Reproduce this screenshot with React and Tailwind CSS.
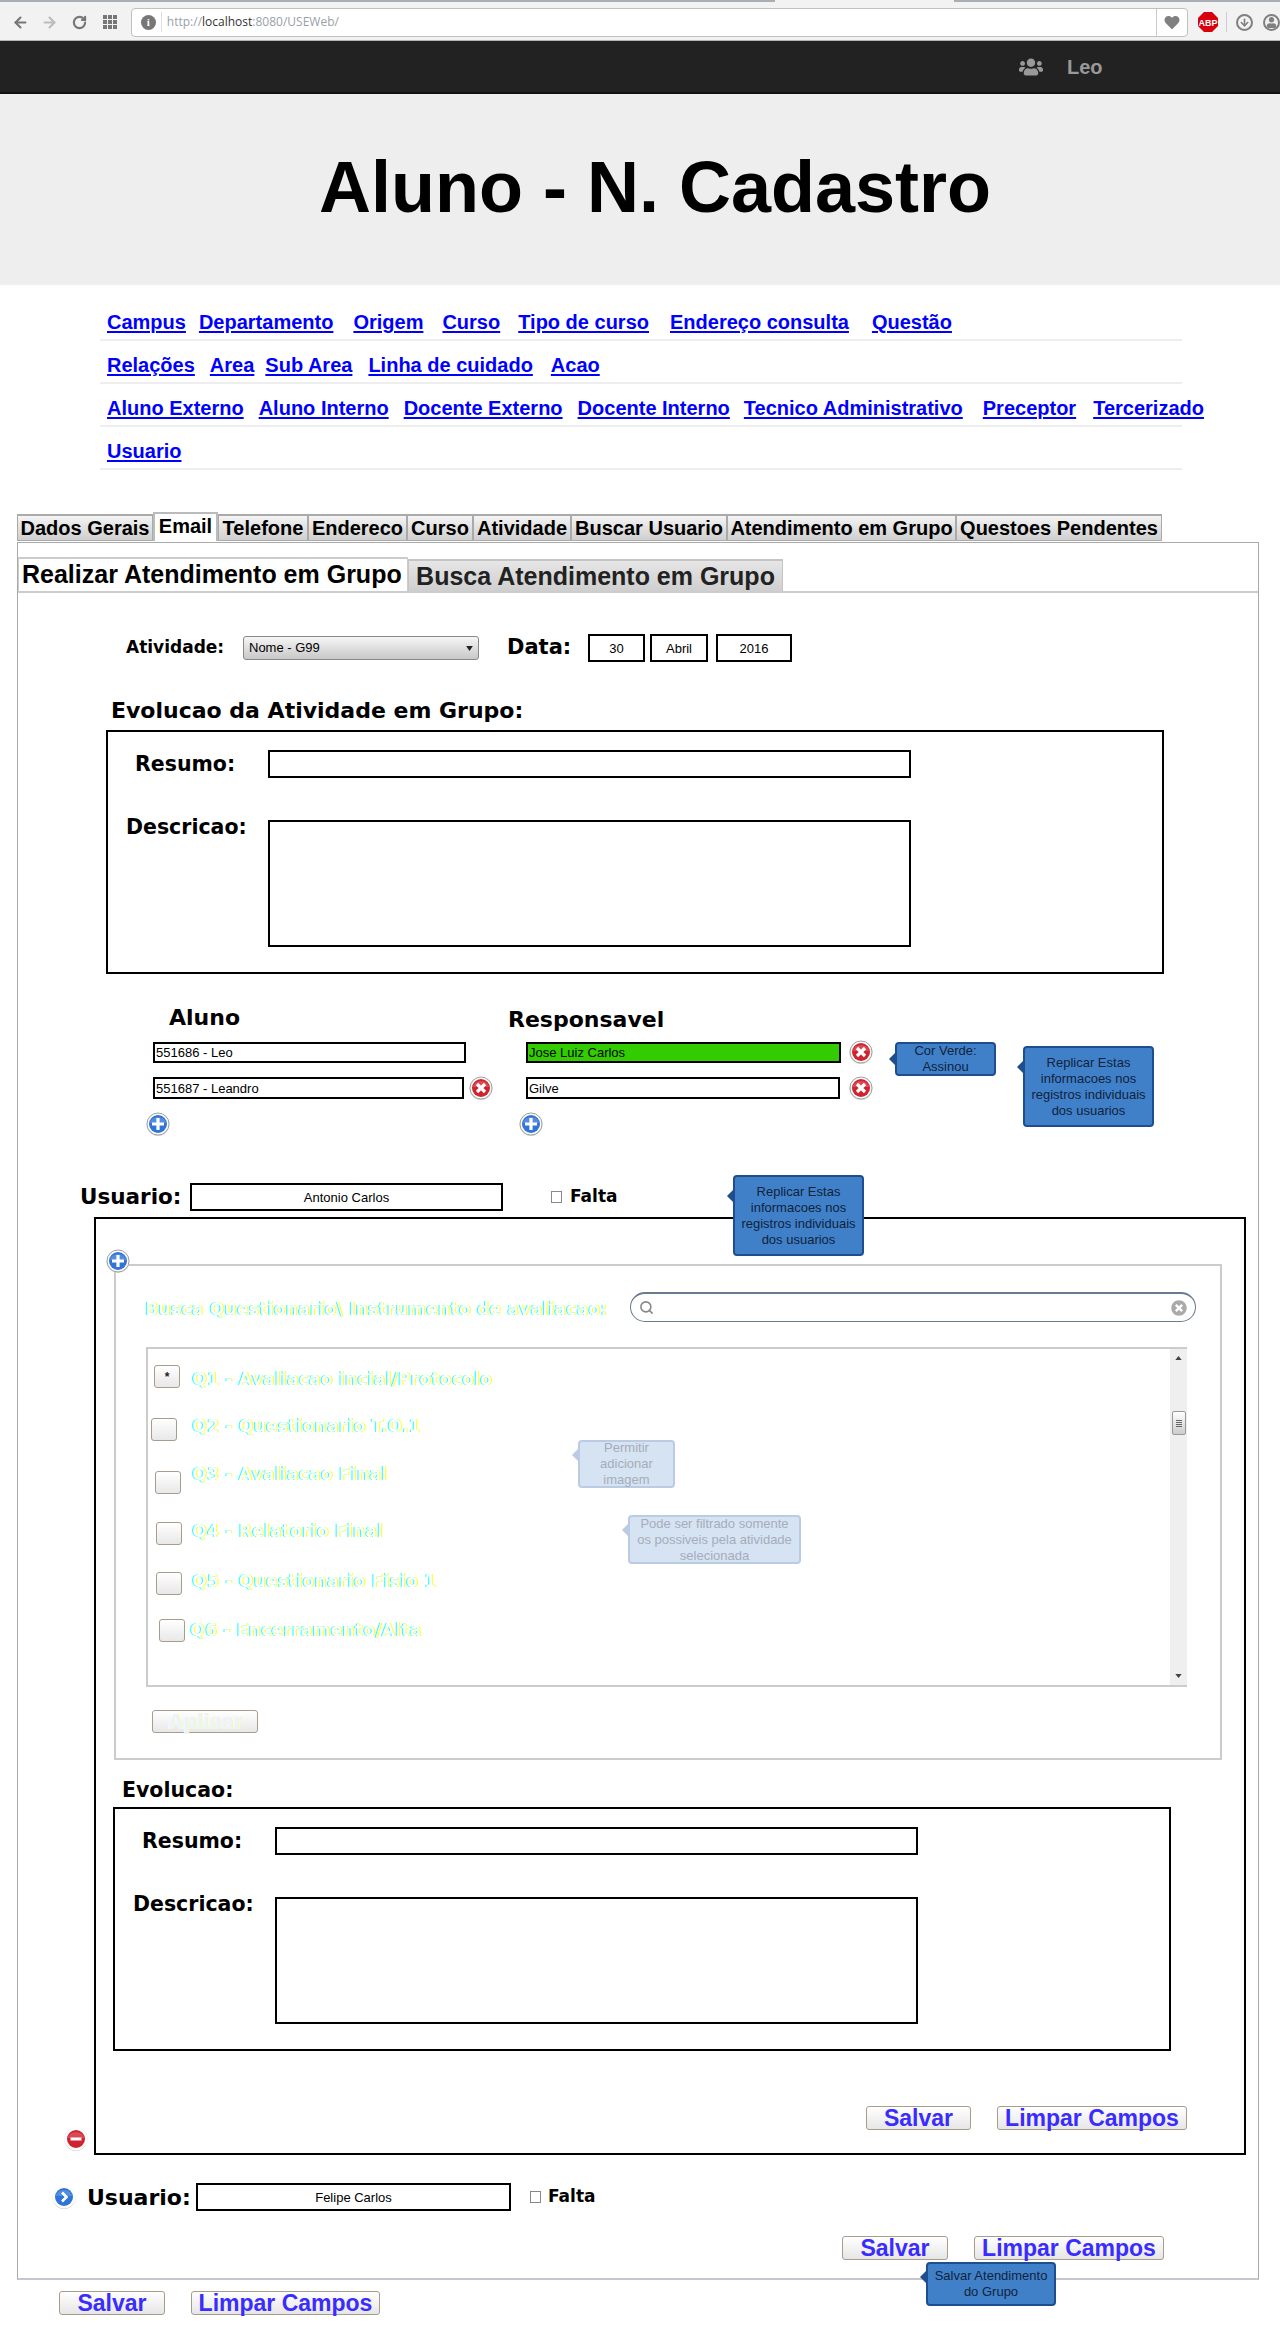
import React from 'react';
import { ArrowLeft, ArrowRight, RotateCw, Search, ArrowDown } from 'lucide-react';
import { FaHeart, FaUsers, FaUser, FaTimesCircle } from 'react-icons/fa';

const heading = "font-['DejaVu_Sans',sans-serif] font-bold text-black whitespace-nowrap";
const faded = "font-['DejaVu_Sans',sans-serif] font-bold text-white whitespace-nowrap [text-shadow:-1px_0_0_#00ffff,1px_0_0_#ffff00]";

const navRows = [
  [
    ['Campus', 'ml-[7px]'],
    ['Departamento', 'ml-[13px]'],
    ['Origem', 'ml-[20px]'],
    ['Curso', 'ml-[19px]'],
    ['Tipo de curso', 'ml-[18px]'],
    ['Endereço consulta', 'ml-[21px]'],
    ['Questão', 'ml-[23px]'],
  ],
  [
    ['Relações', 'ml-[7px]'],
    ['Area', 'ml-[15px]'],
    ['Sub Area', 'ml-[11px]'],
    ['Linha de cuidado', 'ml-[16px]'],
    ['Acao', 'ml-[18px]'],
  ],
  [
    ['Aluno Externo', 'ml-[7px]'],
    ['Aluno Interno', 'ml-[15px]'],
    ['Docente Externo', 'ml-[15px]'],
    ['Docente Interno', 'ml-[15px]'],
    ['Tecnico Administrativo', 'ml-[14px]'],
    ['Preceptor', 'ml-[20px]'],
    ['Tercerizado', 'ml-[17px]'],
  ],
  [['Usuario', 'ml-[7px]']],
];

const tabs = [
  ['Dados Gerais', 'w-[136px]'],
  ['Email', 'w-[65px]'],
  ['Telefone', 'w-[90px]'],
  ['Endereco', 'w-[99px]'],
  ['Curso', 'w-[66px]'],
  ['Atividade', 'w-[98px]'],
  ['Buscar Usuario', 'w-[156px]'],
  ['Atendimento em Grupo', 'w-[229px]'],
  ['Questoes Pendentes', 'w-[206px]'],
];

const questions = [
  { label: 'Q1 - Avaliacao incial/Protocolo', row: 'mt-[16px]', box: 'ml-[6px]', text: 'translate-y-[3px]', mark: '*' },
  { label: 'Q2 - Questionario T.O.1', row: 'mt-[30px]', box: 'ml-[3px]', text: '-translate-y-[3px]' },
  { label: 'Q3 - Avaliacao Final', row: 'mt-[30px]', box: 'ml-[7px]', text: '-translate-y-[8px]' },
  { label: 'Q4 - Relatorio Final', row: 'mt-[28px]', box: 'ml-[8px]', text: '-translate-y-[2px]' },
  { label: 'Q5 - Questionario Fisio 1', row: 'mt-[27px]', box: 'ml-[8px]', text: '-translate-y-[2px]' },
  { label: 'Q6 - Encerramento/Alta', row: 'mt-[24px]', box: 'ml-[11px]', text: '-translate-x-[2px]' },
];

// round aqua icons used for add / remove
const RoundIcon = ({ kind, className = '' }) => {
  const red = kind === 'remove' || kind === 'minus';
  return (
    <svg viewBox="0 0 24 24" className={`w-[24px] h-[24px] shrink-0 ${className}`}>
      <circle cx="12" cy="12.5" r="11.5" fill="#d8d8d8" />
      <circle cx="12" cy="12" r="11" fill="#ffffff" stroke={kind === 'minus' || kind === 'arrow' ? '#ffffff' : '#a0a0a0'} />
      <circle cx="12" cy="12" r="9" fill={red ? '#d1232f' : '#2f74d6'} />
      <path d="M3.5 11a9 9 0 0 1 17 0z" fill="#ffffff" opacity="0.18" />
      {kind === 'remove' && <path d="M8 8l8 8M16 8l-8 8" stroke="#fff" strokeWidth="3.2" />}
      {kind === 'add' && <path d="M12 6v12M6 12h12" stroke="#fff" strokeWidth="3.2" />}
      {kind === 'minus' && <path d="M6.5 12h11" stroke="#fff" strokeWidth="3" />}
      {kind === 'arrow' && <path d="M10 7.5l4.5 4.5-4.5 4.5" fill="none" stroke="#fff" strokeWidth="2.6" />}
    </svg>
  );
};

const Box = ({ className = '', fill = 'bg-white', children }) => (
  <div className={`border-2 border-black ${fill} text-[13px] leading-none text-black flex items-center shrink-0 ${className}`}>
    {children}
  </div>
);

const Note = ({ className = '', pale, tail = 'top-[14px]', children }) => (
  <div
    className={`absolute z-10 border-2 rounded-[4px] flex items-center justify-center text-center text-[13px] leading-[16px] whitespace-nowrap ${
      pale ? 'bg-[#d5e3f3] border-[#bccbe4] text-[#a6adb8]' : 'bg-[#4080c8] border-[#1f4e8f] text-[#10233c]'
    } ${className}`}
  >
    <svg viewBox="0 0 8 14" className={`absolute -left-[9px] w-[8px] h-[14px] ${tail}`}>
      <path d="M8 0L1 7l7 7z" fill={pale ? '#bccbe4' : '#1f4e8f'} />
    </svg>
    <span>{children}</span>
  </div>
);

const Btn = ({ className = '', children }) => (
  <div className={`h-[24px] border border-[#a89c8c] rounded-[3px] bg-gradient-to-b from-white to-[#e6e6e6] flex items-center justify-center text-[23px] font-bold text-[#3a2cff] whitespace-nowrap shrink-0 ${className}`}>
    {children}
  </div>
);

const EvolucaoBox = ({ className = '' }) => (
  <div className={`w-[1058px] h-[244px] border-2 border-black ${className}`}>
    <div className="flex items-center mt-[18px] h-[28px]">
      <div className={`${heading} text-[20.5px] ml-[27px] w-[133px]`}>Resumo:</div>
      <Box className="w-[643px] h-[28px]" />
    </div>
    <div className="flex items-start mt-[42px]">
      <div className={`${heading} text-[20.5px] leading-[20px] ml-[18px] w-[142px] -translate-y-[3px]`}>Descricao:</div>
      <Box className="w-[643px] h-[127px]" />
    </div>
  </div>
);

const Browser = () => (
  <div className="h-[41px] bg-[#f2f2f2] border-b border-[#b5b5b5] relative">
    <div className="flex h-[2px]">
      <div className="w-[775px] bg-[#a9aeb6]" />
      <div className="w-[179px] bg-[#f2f2f2]" />
      <div className="flex-1 bg-[#a9aeb6]" />
    </div>
    <div className="flex items-center h-[32px] mt-[4px]">
      <ArrowLeft className="w-[17px] h-[17px] ml-[12px] text-[#777]" strokeWidth={3} />
      <ArrowRight className="w-[17px] h-[17px] ml-[12px] text-[#bbb]" strokeWidth={3} />
      <RotateCw className="w-[15px] h-[15px] ml-[14px] text-[#777]" strokeWidth={3.5} />
      <div className="grid grid-cols-3 gap-[1px] w-[14px] ml-[16px]">
        {[1, 2, 3, 4, 5, 6, 7, 8, 9].map((n) => (
          <div key={n} className="w-[4px] h-[4px] bg-[#777]" />
        ))}
      </div>
      <div className="ml-[14px] w-[1060px] h-[29px] bg-white border border-[#c0c0c0] rounded-[4px] flex items-center relative">
        <div className="ml-[9px] w-[15px] h-[15px] rounded-full bg-[#777] text-white text-[11px] font-bold flex items-center justify-center font-['Liberation_Serif',serif]">i</div>
        <div className="ml-[5px] w-[1px] h-[20px] bg-[#ddd]" />
        <div className="ml-[5px] text-[12px] font-['Open_Sans',sans-serif] text-[#9aa0a8]">
          http://<span className="text-[#333]">localhost</span>:8080/USEWeb/
        </div>
        <div className="absolute right-0 top-0 h-full w-[31px] border-l border-[#ccc] flex items-center justify-center">
          <FaHeart className="w-[16px] h-[15px] text-[#808080]" />
        </div>
      </div>
      <svg viewBox="0 0 20 20" className="w-[20px] h-[20px] ml-[10px] shrink-0">
        <path d="M6 0h8l6 6v8l-6 6H6l-6-6V6z" fill="#d9000d" />
        <text x="10" y="13.5" textAnchor="middle" fontSize="9" fontWeight="700" fill="#fff" fontFamily="Liberation Sans">ABP</text>
      </svg>
      <div className="ml-[8px] w-[1px] h-[20px] bg-[#ccc]" />
      <div className="ml-[9px] w-[17px] h-[17px] rounded-full border-2 border-[#808080] flex items-center justify-center shrink-0">
        <ArrowDown className="w-[11px] h-[11px] text-[#808080]" strokeWidth={3.5} />
      </div>
      <div className="ml-[10px] w-[17px] h-[17px] rounded-full border-2 border-[#808080] flex items-center justify-center overflow-hidden shrink-0">
        <FaUser className="w-[11px] h-[11px] text-[#808080]" />
      </div>
    </div>
  </div>
);

const App = () => {
  return (
    <div className="w-[1280px] h-[2330px] overflow-hidden bg-white font-['Liberation_Sans',Arial,sans-serif]">
      <Browser />

      <div className="h-[53px] bg-[#222222] border-b-2 border-[#111] flex items-center">
        <FaUsers className="ml-[1019px] w-[24px] h-[24px] text-[#999]" />
        <span className="ml-[24px] text-[20px] font-bold text-[#999]">Leo</span>
      </div>

      <div className="h-[191px] bg-[#eeeeee] flex items-center justify-center pl-[30px] pb-[6px]">
        <h1 className="text-[72px] font-bold text-black leading-none">Aluno - N. Cadastro</h1>
      </div>

      <nav className="mt-[13px] ml-[100px] w-[1082px]">
        {navRows.map((row, i) => (
          <div key={i} className="h-[43px] border-b-2 border-[#eeeeee] flex items-start pt-[9px] whitespace-nowrap">
            {row.map(([label, gap]) => (
              <a key={label} href="#" className={`${gap} text-[20px] font-bold text-[#0000ff] underline decoration-2 underline-offset-2`}>
                {label}
              </a>
            ))}
          </div>
        ))}
      </nav>

      <div className="mt-[43px] ml-[17px] w-[1243px] h-[29px] flex items-end border-b border-transparent">
        {tabs.map(([label, w]) =>
          label === 'Email' ? (
            <div key={label} className={`${w} h-[29px] bg-white border-2 border-b-0 border-[#bbb] text-[20px] leading-[24px] font-bold text-black text-center whitespace-nowrap`}>
              {label}
            </div>
          ) : (
            <div key={label} className={`${w} h-[27px] bg-gradient-to-b from-[#f4f4f4] to-[#cfcfcf] border border-t-2 border-[#aaa] text-[20px] leading-[24px] font-bold text-black text-center whitespace-nowrap`}>
              {label}
            </div>
          )
        )}
      </div>

      <div className="relative ml-[17px] w-[1242px] h-[1738px] border border-[#aaa] border-b-2 border-b-[#c6c6ce]">
        <div className="flex items-end h-[50px] border-b-2 border-[#ccc]">
          <div className="w-[390px] h-[34px] bg-white border-t-2 border-x border-[#ccc] text-[25px] leading-[30px] font-bold text-black pl-[3px] whitespace-nowrap">
            Realizar Atendimento em Grupo
          </div>
          <div className="w-[375px] h-[32px] bg-gradient-to-b from-[#e6e6e6] to-[#cfcfcf] border-t-2 border-x border-[#c4c4c4] text-[25px] leading-[30px] font-bold text-[#222] text-center whitespace-nowrap">
            Busca Atendimento em Grupo
          </div>
        </div>

        <div className="flex items-center mt-[41px] h-[28px] ml-[108px]">
          <div className={`${heading} text-[17px] w-[117px]`}>Atividade:</div>
          <div className="w-[236px] h-[24px] border border-[#888] rounded-[3px] bg-gradient-to-b from-[#f6f6f6] to-[#c8c8c8] flex items-center justify-between px-[5px] text-[13px] text-black">
            <span>Nome - G99</span>
            <svg viewBox="0 0 8 6" className="w-[7px] h-[5px]"><path d="M0 0h8L4 6z" fill="#222" /></svg>
          </div>
          <div className={`${heading} text-[21px] ml-[28px] w-[81px]`}>Data:</div>
          <Box className="w-[57px] h-[28px] justify-center">30</Box>
          <Box className="w-[58px] h-[28px] justify-center ml-[5px]">Abril</Box>
          <Box className="w-[76px] h-[28px] justify-center ml-[8px]">2016</Box>
        </div>

        <div className={`${heading} text-[22px] h-[28px] leading-[28px] mt-[35px] ml-[93px]`}>Evolucao da Atividade em Grupo:</div>
        <EvolucaoBox className="mt-[5px] ml-[88px]" />

        <div className="flex items-center h-[28px] mt-[31px] -translate-y-[2px]">
          <div className={`${heading} text-[22px] ml-[151px] w-[339px]`}>Aluno</div>
          <div className={`${heading} text-[22px] mt-[4px]`}>Responsavel</div>
        </div>
        <div className="flex items-center h-[21px] mt-[9px]">
          <div className="ml-[135px] w-[373px]">
            <Box className="w-[313px] h-[21px] pl-[1px]">551686 - Leo</Box>
          </div>
          <Box className="w-[315px] h-[21px] pl-[1px]" fill="bg-[#33cc00]">Jose Luiz Carlos</Box>
          <RoundIcon kind="remove" className="ml-[8px] -mt-[2px]" />
        </div>
        <div className="flex items-center h-[22px] mt-[14px]">
          <div className="ml-[135px] w-[373px] flex items-center">
            <Box className="w-[311px] h-[22px] pl-[1px]">551687 - Leandro</Box>
            <RoundIcon kind="remove" className="ml-[5px]" />
          </div>
          <Box className="w-[314px] h-[22px] pl-[1px]">Gilve</Box>
          <RoundIcon kind="remove" className="ml-[9px]" />
        </div>
        <div className="flex items-center h-[22px] mt-[14px]">
          <RoundIcon kind="add" className="ml-[128px]" />
          <RoundIcon kind="add" className="ml-[349px]" />
        </div>

        <div className="flex items-center h-[28px] mt-[48px]">
          <div className={`${heading} text-[21.5px] ml-[62px] w-[110px]`}>Usuario:</div>
          <Box className="w-[313px] h-[28px] justify-center">Antonio Carlos</Box>
          <div className="w-[11px] h-[12px] ml-[48px] border border-[#888] bg-white" />
          <div className={`${heading} text-[17px] ml-[8px]`}>Falta</div>
        </div>

        <div className="relative ml-[76px] mt-[6px] w-[1152px] h-[938px] border-2 border-black">
          <RoundIcon kind="add" className="absolute left-[10px] top-[30px] z-10" />
          <div className="ml-[18px] mt-[45px] w-[1108px] h-[496px] border-2 border-[#cccccc]">
            <div className="flex items-center h-[30px] mt-[26px] ml-[29px]">
              <div className={`${faded} text-[17.5px] w-[485px] translate-y-[2px]`}>Busca Questionario\ Instrumento de avaliacao:</div>
              <div className="w-[566px] h-[30px] rounded-full border border-t-2 border-[#6b7a90] flex items-center justify-between px-[8px]">
                <Search className="w-[15px] h-[15px] text-[#888]" strokeWidth={2.5} />
                <FaTimesCircle className="w-[16px] h-[16px] text-[#aaa]" />
              </div>
            </div>
            <div className="flex ml-[30px] mt-[25px] w-[1041px] h-[340px] border-2 border-[#cccccc] border-r-0">
              <div className="flex-1">
                {questions.map((q) => (
                  <div key={q.label} className={`flex items-center h-[23px] ${q.row}`}>
                    <div className="w-[44px] shrink-0">
                      <div className={`w-[26px] h-[23px] rounded-[3px] border border-[#a89c8c] bg-gradient-to-b from-white to-[#e8e8e8] flex items-center justify-center text-[12px] font-bold text-[#222] ${q.box}`}>
                        {q.mark}
                      </div>
                    </div>
                    <div className={`${faded} text-[17.5px] ${q.text}`}>{q.label}</div>
                  </div>
                ))}
              </div>
              <div className="w-[17px] h-full bg-[#efefef] flex flex-col items-center relative">
                <svg viewBox="0 0 8 5" className="w-[7px] h-[4px] mt-[7px]"><path d="M4 0l4 5H0z" fill="#444" /></svg>
                <div className="mt-[51px] w-[14px] h-[24px] border border-[#999] rounded-[2px] bg-gradient-to-b from-white to-[#ccc] flex flex-col items-center justify-center gap-[1px]">
                  <div className="w-[6px] h-[1px] bg-[#666]" />
                  <div className="w-[6px] h-[1px] bg-[#666]" />
                  <div className="w-[6px] h-[1px] bg-[#666]" />
                  <div className="w-[6px] h-[1px] bg-[#666]" />
                </div>
                <svg viewBox="0 0 8 5" className="w-[7px] h-[4px] mt-auto mb-[7px]"><path d="M0 0h8L4 5z" fill="#444" /></svg>
              </div>
            </div>
            <div className="ml-[36px] mt-[23px] w-[106px] h-[23px] rounded-[3px] border border-[#a89c8c] bg-gradient-to-b from-white to-[#e8e8e8] flex items-center justify-center text-[22px] font-bold text-[#f0f2fa] [text-shadow:-1px_0_0_#e8ffff,1px_0_0_#ffffa8]">
              Aplicar
            </div>
          </div>

          <div className={`${heading} text-[20.5px] h-[28px] leading-[28px] ml-[26px] mt-[16px]`}>Evolucao:</div>
          <EvolucaoBox className="mt-[3px] ml-[17px]" />

          <div className="flex mt-[55px]">
            <Btn className="ml-[770px] w-[105px]">Salvar</Btn>
            <Btn className="ml-[26px] w-[190px]">Limpar Campos</Btn>
          </div>
        </div>

        <RoundIcon kind="minus" className="absolute left-[46px] top-[1584px]" />

        <div className="flex items-center h-[28px] mt-[28px]">
          <RoundIcon kind="arrow" className="ml-[34px]" />
          <div className={`${heading} text-[22px] ml-[11px] w-[109px]`}>Usuario:</div>
          <Box className="w-[315px] h-[28px] justify-center">Felipe Carlos</Box>
          <div className="w-[11px] h-[12px] ml-[19px] border border-[#888] bg-white" />
          <div className={`${heading} text-[17px] ml-[7px]`}>Falta</div>
        </div>

        <div className="flex mt-[25px]">
          <Btn className="ml-[824px] w-[106px]">Salvar</Btn>
          <Btn className="ml-[26px] w-[190px]">Limpar Campos</Btn>
        </div>

        <Note className="left-[877px] top-[499px] w-[101px] h-[34px]" tail="top-[8px]">Cor Verde:<br />Assinou</Note>
        <Note className="left-[1005px] top-[503px] w-[131px] h-[81px]" tail="top-[12px]">Replicar Estas<br />informacoes nos<br />registros individuais<br />dos usuarios</Note>
        <Note className="left-[715px] top-[632px] w-[131px] h-[81px]" tail="top-[12px]">Replicar Estas<br />informacoes nos<br />registros individuais<br />dos usuarios</Note>
        <Note pale className="left-[560px] top-[897px] w-[97px] h-[48px]" tail="top-[6px]">Permitir<br />adicionar<br />imagem</Note>
        <Note pale className="left-[610px] top-[972px] w-[173px] h-[49px]" tail="top-[6px]">Pode ser filtrado somente<br />os possiveis pela atividade<br />selecionada</Note>
        <Note className="left-[908px] top-[1719px] w-[130px] h-[44px]" tail="top-[6px]">Salvar Atendimento<br />do Grupo</Note>
      </div>

      <div className="flex mt-[11px]">
        <Btn className="ml-[59px] w-[106px]">Salvar</Btn>
        <Btn className="ml-[26px] w-[189px]">Limpar Campos</Btn>
      </div>
    </div>
  );
};

export default App;
